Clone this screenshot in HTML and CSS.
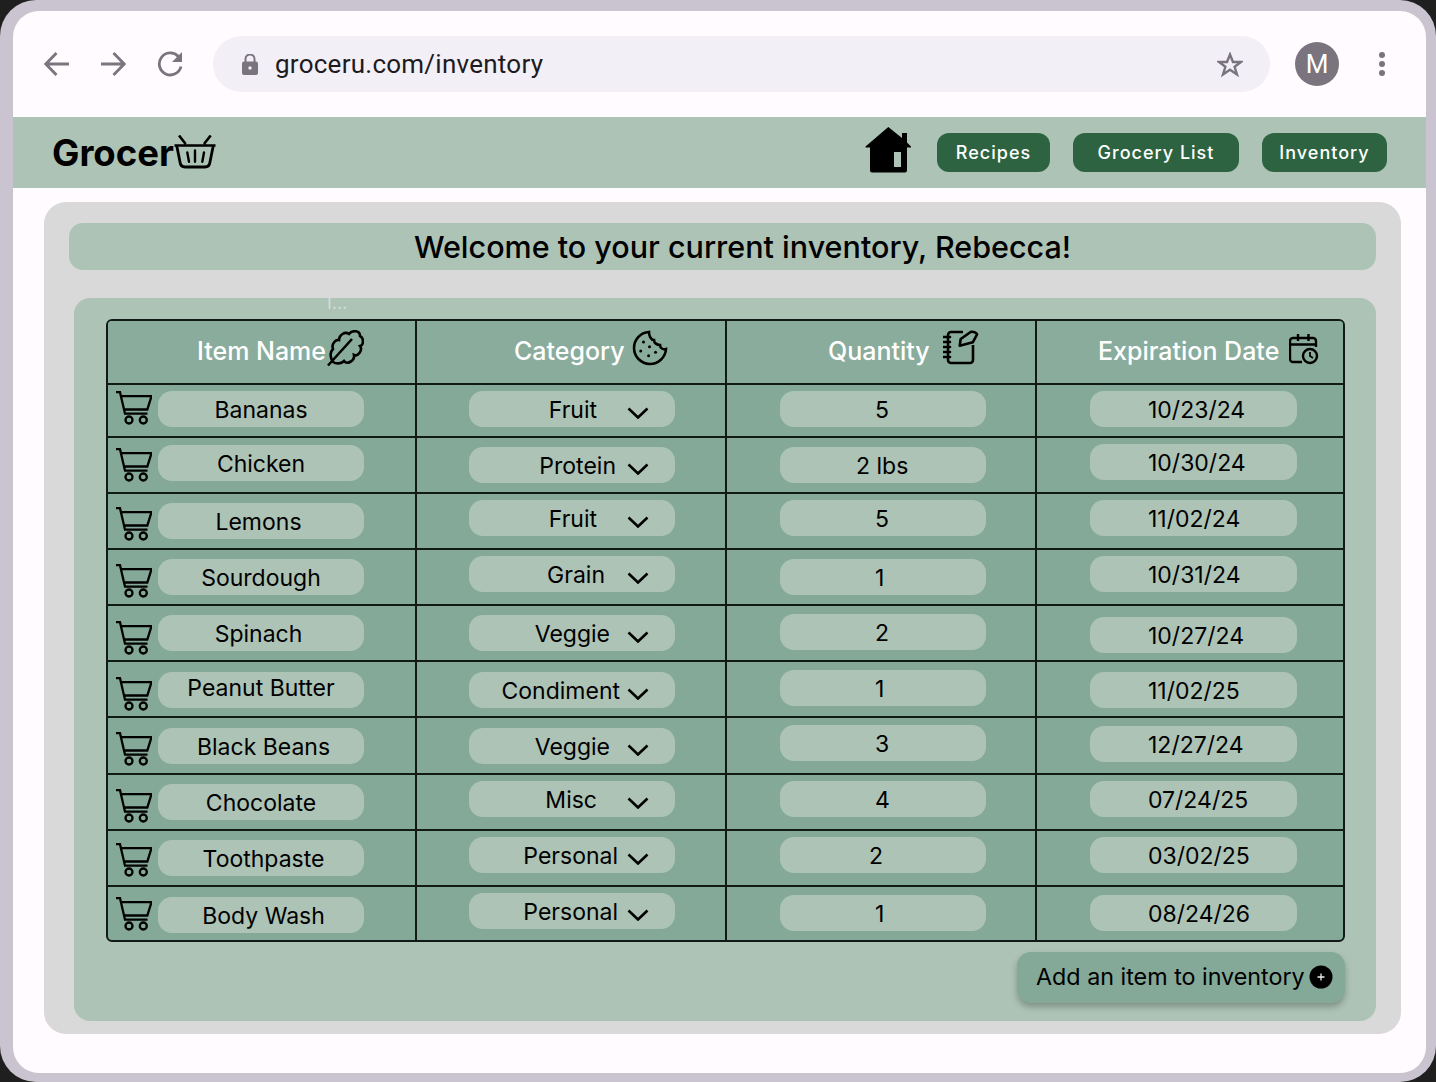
FILE: index.html
```html
<!DOCTYPE html>
<html lang="en">
<head>
    <meta charset="UTF-8">
    <title>Grocer Inventory</title>
    <link rel="stylesheet" href="styles.css">
</head>
<body>
    <svg class="icon-defs" width="0" height="0">
        <symbol id="cart" viewBox="0 0 37 36">
            <path d="M1 1.2H5L10 22.7H32.5M6 5.2H36.5L32.3 18.5H9" fill="none" stroke="currentColor" stroke-width="2.3"/>
            <circle cx="14" cy="29" r="3.5" fill="none" stroke="currentColor" stroke-width="2.3"/>
            <circle cx="28.3" cy="29" r="3.5" fill="none" stroke="currentColor" stroke-width="2.3"/>
        </symbol>
        <symbol id="chevron" viewBox="0 0 22 12">
            <path d="M1.5 1.5L11 10.5L20.5 1.5" fill="none" stroke="currentColor" stroke-width="2.6"/>
        </symbol>
    </svg>

    <div class="device">
        <div class="window">
            <header class="toolbar">
                <svg class="tool-icon arrow-back" viewBox="0 0 26 26"><path d="M25 13H2M12.5 2L1.8 13L12.5 24" fill="none" stroke="#79747e" stroke-width="2.8"/></svg>
                <svg class="tool-icon arrow-forward" viewBox="0 0 26 26"><path d="M1 13H24M13.5 2L24.2 13L13.5 24" fill="none" stroke="#79747e" stroke-width="2.8"/></svg>
                <svg class="tool-icon reload" viewBox="0 0 26 26"><path d="M21.4 5.5A11 11 0 1 0 24 15.5" fill="none" stroke="#79747e" stroke-width="2.8"/><path d="M25 1V11H15Z" fill="#79747e"/></svg>
                <div class="url-bar">
                    <svg class="lock" viewBox="0 0 16 21"><path d="M3.5 8V5a4.5 4.5 0 0 1 9 0V8" fill="none" stroke="#79747e" stroke-width="2"/><rect y="7.5" width="16" height="13.5" rx="2" fill="#79747e"/><circle cx="8" cy="14" r="1.7" fill="#f3eff7"/></svg>
                    <span class="url-text">groceru.com/inventory</span>
                    <svg class="star" viewBox="0 0 26 25"><path d="M13 2.5L16 10H24L17.6 14.8L20 22.5L13 17.8L6 22.5L8.4 14.8L2 10H10Z" fill="none" stroke="#79747e" stroke-width="2.4"/></svg>
                </div>
                <div class="avatar">M</div>
                <div class="menu-dots"><span></span><span></span><span></span></div>
            </header>

            <nav class="site-nav">
                <div class="logo">
                    <span class="logo-text">Grocer</span>
                    <svg class="logo-basket" viewBox="0 0 42 35">
                        <path d="M5 0.5L11.7 9M36.7 0.5L30 9M0.5 10.5H41.5" fill="none" stroke="#000" stroke-width="2.6"/>
                        <path d="M2.8 11L6 27Q6.6 32 11 32H31Q35.4 32 36 27L39.2 11" fill="none" stroke="#000" stroke-width="2.8"/>
                        <path d="M13.3 17.5L15 26.7M21 15.5V26.7M30 17.5L28.3 26.7" fill="none" stroke="#000" stroke-width="2.4" stroke-linecap="round"/>
                    </svg>
                </div>
                <svg class="home-icon" viewBox="0 0 46 46">
                    <path d="M23.3 0L0.5 19.5V20.5H5V43.5Q5 45.5 7 45.5H40Q42 45.5 42 43.5V20.5H46V19.5L42 15.5V6H37V11Z" fill="#000"/>
                    <rect x="29" y="25" width="7" height="15" fill="#adc3b5"/>
                </svg>
                <a class="nav-btn btn-recipes">Recipes</a>
                <a class="nav-btn btn-list">Grocery List</a>
                <a class="nav-btn btn-inventory">Inventory</a>
            </nav>

            <main class="content-panel">
                <h1 class="welcome">Welcome to your current inventory, Rebecca!</h1>

                <section class="inventory-panel">
                    <span class="stray-text">I...</span>
                    <div class="inventory-table">
                        <div class="head-cell head-item">
                            <span>Item Name</span>
                            <svg class="head-icon leaf" viewBox="0 0 37 37"><path d="M6 32C3 27 3 22 6 19C4 14 9 9 12 10C12 5 18 1 22 4C25 0 33 0 33 6C37 8 37 15 33 16C36 20 31 27 27 25C28 31 20 35 17 31C14 34 9 34 6 32Z" fill="none" stroke="#000" stroke-width="2.6"/><path d="M1 35.5L25 9" fill="none" stroke="#000" stroke-width="2.6"/></svg>
                        </div>
                        <div class="head-cell head-category">
                            <span>Category</span>
                            <svg class="head-icon cookie" viewBox="0 0 36 36"><path d="M17 2A16 16 0 1 0 34 19C31 20 28 18 28 15C25 15 22 13 22 10C19 10 17 6 17 2Z" fill="none" stroke="#000" stroke-width="2.6"/><circle cx="11.5" cy="12" r="1.5"/><circle cx="17.5" cy="16.7" r="1.5"/><circle cx="8.7" cy="21" r="1.5"/><circle cx="16.6" cy="25.7" r="1.5"/><circle cx="23.5" cy="22.3" r="1.5"/></svg>
                        </div>
                        <div class="head-cell head-quantity">
                            <span>Quantity</span>
                            <svg class="head-icon notebook" viewBox="0 0 36 36"><path d="M20 2H8A3 3 0 0 0 5 5V30A3 3 0 0 0 8 33H27A3 3 0 0 0 30 30V15" fill="none" stroke="#000" stroke-width="2.6"/><path d="M0.5 7H7M0.5 12H7M0.5 17H7M0.5 22H7M0.5 27H7" stroke="#000" stroke-width="2.6" stroke-linecap="round"/><path d="M16.7 15.7L17.7 9L28 1.7Q33 1.5 34 4.5L29.8 12.3Z" fill="none" stroke="#000" stroke-width="2.6" stroke-linejoin="round"/></svg>
                        </div>
                        <div class="head-cell head-date">
                            <span>Expiration Date</span>
                            <svg class="head-icon calendar" viewBox="0 0 30 32"><path d="M13 29H4A3 3 0 0 1 1 26V8A3 3 0 0 1 4 5H24A3 3 0 0 1 27 8V14M1 11.5H27M9 1V8M19.5 1V8" fill="none" stroke="#000" stroke-width="2.4"/><circle cx="21" cy="23" r="7" fill="none" stroke="#000" stroke-width="2.4"/><path d="M21 19V23L24 25" fill="none" stroke="#000" stroke-width="1.8"/></svg>
                        </div>

                        <!-- rows -->
                        <div class="cell item-cell"><svg class="cart m5"><use href="#cart"/></svg><div class="pill m5">Bananas</div></div>
                        <div class="cell cat-cell"><div class="pill select m5"><span class="gap-30">Fruit</span><svg class="chevron"><use href="#chevron"/></svg></div></div>
                        <div class="cell qty-cell"><div class="pill qty m5">5</div></div>
                        <div class="cell date-cell"><div class="pill date m5">10/23/24</div></div>

                        <div class="cell item-cell"><svg class="cart m9"><use href="#cart"/></svg><div class="pill m6">Chicken</div></div>
                        <div class="cell cat-cell"><div class="pill select m8"><span class="gap-11">Protein</span><svg class="chevron"><use href="#chevron"/></svg></div></div>
                        <div class="cell qty-cell"><div class="pill qty qty-wide m8">2 lbs</div></div>
                        <div class="cell date-cell"><div class="pill date m5">10/30/24</div></div>

                        <div class="cell item-cell"><svg class="cart m12"><use href="#cart"/></svg><div class="pill nudge-left m8">Lemons</div></div>
                        <div class="cell cat-cell"><div class="pill select m5"><span class="gap-30">Fruit</span><svg class="chevron"><use href="#chevron"/></svg></div></div>
                        <div class="cell qty-cell"><div class="pill qty m5">5</div></div>
                        <div class="cell date-cell"><div class="pill date m5">11/02/24</div></div>

                        <div class="cell item-cell"><svg class="cart m13"><use href="#cart"/></svg><div class="pill m8">Sourdough</div></div>
                        <div class="cell cat-cell"><div class="pill select m5"><span class="gap-22">Grain</span><svg class="chevron"><use href="#chevron"/></svg></div></div>
                        <div class="cell qty-cell"><div class="pill qty m8">1</div></div>
                        <div class="cell date-cell"><div class="pill date m5">10/31/24</div></div>

                        <div class="cell item-cell"><svg class="cart m14"><use href="#cart"/></svg><div class="pill nudge-left m8">Spinach</div></div>
                        <div class="cell cat-cell"><div class="pill select m8"><span class="gap-17">Veggie</span><svg class="chevron"><use href="#chevron"/></svg></div></div>
                        <div class="cell qty-cell"><div class="pill qty m7">2</div></div>
                        <div class="cell date-cell"><div class="pill date m10">10/27/24</div></div>

                        <div class="cell item-cell"><svg class="cart m14"><use href="#cart"/></svg><div class="pill raised m9">Peanut Butter</div></div>
                        <div class="cell cat-cell"><div class="pill select m9"><span class="gap-7">Condiment</span><svg class="chevron"><use href="#chevron"/></svg></div></div>
                        <div class="cell qty-cell"><div class="pill qty m7">1</div></div>
                        <div class="cell date-cell"><div class="pill date m9">11/02/25</div></div>

                        <div class="cell item-cell"><svg class="cart m13"><use href="#cart"/></svg><div class="pill nudge-right m9">Black Beans</div></div>
                        <div class="cell cat-cell"><div class="pill select m9"><span class="gap-17">Veggie</span><svg class="chevron"><use href="#chevron"/></svg></div></div>
                        <div class="cell qty-cell"><div class="pill qty m6">3</div></div>
                        <div class="cell date-cell"><div class="pill date m7">12/27/24</div></div>

                        <div class="cell item-cell"><svg class="cart m13"><use href="#cart"/></svg><div class="pill m8">Chocolate</div></div>
                        <div class="cell cat-cell"><div class="pill select m5"><span class="gap-30">Misc</span><svg class="chevron"><use href="#chevron"/></svg></div></div>
                        <div class="cell qty-cell"><div class="pill qty m5">4</div></div>
                        <div class="cell date-cell"><div class="pill date m5">07/24/25</div></div>

                        <div class="cell item-cell"><svg class="cart m11"><use href="#cart"/></svg><div class="pill nudge-right m8">Toothpaste</div></div>
                        <div class="cell cat-cell"><div class="pill select m5"><span class="gap-9">Personal</span><svg class="chevron"><use href="#chevron"/></svg></div></div>
                        <div class="cell qty-cell"><div class="pill qty qty-left m5">2</div></div>
                        <div class="cell date-cell"><div class="pill date m5">03/02/25</div></div>

                        <div class="cell item-cell"><svg class="cart m9"><use href="#cart"/></svg><div class="pill nudge-right m9">Body Wash</div></div>
                        <div class="cell cat-cell"><div class="pill select m5"><span class="gap-9">Personal</span><svg class="chevron"><use href="#chevron"/></svg></div></div>
                        <div class="cell qty-cell"><div class="pill qty m7">1</div></div>
                        <div class="cell date-cell"><div class="pill date m7">08/24/26</div></div>
                    </div>

                    <div class="add-row">
                        <button class="add-btn">Add an item to inventory
                            <svg class="add-icon" viewBox="0 0 24 24"><circle cx="12" cy="12" r="11.5" fill="#000"/><path d="M12 8.5V15.5M8.5 12H15.5" stroke="#e8efe9" stroke-width="1.3"/></svg>
                        </button>
                    </div>
                </section>
            </main>
        </div>
    </div>
</body>
</html>
```

FILE: styles.css
```css
:root {
    --sage-color: #adc3b5;
    --table-color: #84a998;
    --head-color: #8aac9c;
    --line-color: #111a16;
    --forest-color: #2d6340;
    --chrome-color: #79747e;
    --paper-color: #fffbfe;
}

* {
    box-sizing: border-box;
}

body {
    margin: 0;
    background-color: #1f1f1f;
    font-family: Inter, 'Open Sans', sans-serif;
    color: #000;
    overflow: hidden;
}

.icon-defs {
    display: block;
    height: 0;
}

.device {
    width: 1436px;
    height: 1082px;
    padding: 11px 10px 9px 13px;
    background-color: #cac4d0;
    border-radius: 36px;
}

.window {
    height: 100%;
    display: flex;
    flex-direction: column;
    background-color: var(--paper-color);
    border-radius: 26px;
    overflow: hidden;
}

/* browser toolbar */
.toolbar {
    height: 106px;
    flex-shrink: 0;
    display: flex;
    align-items: center;
    padding-left: 31px;
}

.tool-icon {
    width: 26px;
    height: 26px;
    flex-shrink: 0;
}

.arrow-forward {
    margin-left: 30px;
}

.reload {
    margin-left: 31px;
}

.url-bar {
    width: 1057px;
    height: 56px;
    margin-left: 30px;
    padding: 0 27px 0 29px;
    display: flex;
    align-items: center;
    background-color: #f3eff7;
    border-radius: 28px;
}

.lock {
    width: 16px;
    height: 21px;
}

.url-text {
    margin-left: 17px;
    flex: 1;
    font-family: Roboto, sans-serif;
    font-size: 26px;
    letter-spacing: 0.25px;
    color: #1d1b20;
}

.star {
    width: 26px;
    height: 25px;
}

.avatar {
    width: 44px;
    height: 44px;
    margin-left: 25px;
    display: flex;
    align-items: center;
    justify-content: center;
    background-color: var(--chrome-color);
    border-radius: 50%;
    font-family: Roboto, sans-serif;
    font-size: 26px;
    color: #fff;
}

.menu-dots {
    margin-left: 40px;
    display: flex;
    flex-direction: column;
    gap: 3px;
}

.menu-dots span {
    width: 6px;
    height: 6px;
    background-color: var(--chrome-color);
    border-radius: 50%;
}

/* site nav */
.site-nav {
    height: 71px;
    flex-shrink: 0;
    display: flex;
    align-items: center;
    padding: 0 39px 0 39px;
    background-color: var(--sage-color);
}

.logo {
    display: flex;
    align-items: center;
    margin-right: auto;
}

.logo-text {
    font-size: 36.5px;
    font-weight: 700;
}

.logo-basket {
    width: 42px;
    height: 35px;
    margin-top: -1px;
}

.home-icon {
    width: 46px;
    height: 46px;
    margin-right: 26px;
    margin-top: -5px;
}

.nav-btn {
    height: 39px;
    display: flex;
    align-items: center;
    justify-content: center;
    background-color: var(--forest-color);
    border-radius: 12px;
    color: #fff;
    font-size: 18px;
    font-weight: 500;
    letter-spacing: 1px;
}

.btn-recipes {
    width: 113px;
}

.btn-list {
    width: 166px;
    margin-left: 23px;
}

.btn-inventory {
    width: 125px;
    margin-left: 23px;
}

/* main area */
.content-panel {
    height: 832px;
    margin: 14px 25px 0 31px;
    padding-top: 21px;
    background-color: #d9d9d9;
    border-radius: 22px;
}

.welcome {
    height: 47px;
    margin: 0 25px;
    padding-left: 40px;
    display: flex;
    align-items: center;
    justify-content: center;
    background-color: var(--sage-color);
    border-radius: 14px;
    font-size: 30.5px;
    font-weight: 500;
}

.inventory-panel {
    position: relative;
    height: 723px;
    margin: 28px 25px 0 30px;
    padding: 21px 31px 0 32px;
    background-color: var(--sage-color);
    border-radius: 16px;
}

.stray-text {
    position: absolute;
    left: 253px;
    top: -6px;
    font-size: 18px;
    color: #d3ddd6;
}

.inventory-table {
    height: 623px;
    display: grid;
    grid-template-columns: 309px 310px 310px 1fr;
    grid-template-rows: 62px 53px 56px 56px 56px 56px 56px 57px 56px 56px 55px;
    background-color: var(--table-color);
    border: 2px solid var(--line-color);
    border-radius: 6px;
    overflow: hidden;
}

.head-cell {
    display: flex;
    align-items: center;
    padding-bottom: 2px;
    background-color: var(--head-color);
    border-right: 2px solid var(--line-color);
    color: #fff;
    font-size: 25px;
    font-weight: 500;
}

.head-cell:nth-child(4) {
    border-right: none;
}

.head-item {
    padding-left: 89px;
}

.head-category {
    padding-left: 97px;
}

.head-quantity {
    padding-left: 101px;
}

.head-date {
    padding-left: 61px;
}

.head-icon {
    flex-shrink: 0;
}

.leaf {
    width: 37px;
    height: 37px;
    margin-left: 1px;
    margin-top: -6px;
}

.cookie {
    width: 36px;
    height: 36px;
    margin-left: 7px;
    margin-top: -7px;
}

.notebook {
    width: 36px;
    height: 36px;
    margin-left: 13px;
    margin-top: -6px;
}

.calendar {
    width: 30px;
    height: 32px;
    margin-left: 10px;
    margin-top: -5px;
}

.cell {
    display: flex;
    justify-content: flex-start;
    align-items: flex-start;
    padding-top: 1px;
    border-top: 2px solid var(--line-color);
    border-right: 2px solid var(--line-color);
}

.cat-cell {
    padding-left: 52px;
}

.qty-cell {
    padding-left: 53px;
}

.date-cell {
    padding-left: 53px;
    border-right: none;
}

.item-cell {
    padding-left: 7px;
}

.cart {
    width: 37px;
    height: 36px;
    flex-shrink: 0;
    color: #000;
}

.pill {
    width: 206px;
    height: 36px;
    display: flex;
    align-items: center;
    justify-content: center;
    padding-top: 2px;
    background-color: var(--sage-color);
    border-radius: 14px;
    font-size: 23px;
    color: #000;
}

.item-cell .pill {
    margin-left: 6px;
}

.nudge-left {
    padding-right: 5px;
}

.nudge-right {
    padding-left: 5px;
}

.raised {
    padding-bottom: 6px;
}

.select {
    justify-content: flex-end;
    padding-right: 26px;
}

.chevron {
    width: 22px;
    height: 12px;
    margin-top: 5px;
    flex-shrink: 0;
}

.gap-7 {
    margin-right: 7px;
}

.gap-9 {
    margin-right: 9px;
}

.gap-11 {
    margin-right: 11px;
}

.gap-17 {
    margin-right: 17px;
}

.gap-22 {
    margin-right: 22px;
}

.gap-30 {
    margin-right: 30px;
}

.qty {
    justify-content: flex-start;
    padding-left: 95px;
}

.qty-wide {
    padding-left: 76px;
}

.qty-left {
    padding-left: 89px;
}

.date {
    width: 207px;
    justify-content: flex-start;
    padding-left: 58px;
}

/* vertical place of a pill or cart in its row */
.m5 {
    margin-top: 5px;
}

.m6 {
    margin-top: 6px;
}

.m7 {
    margin-top: 7px;
}

.m8 {
    margin-top: 8px;
}

.m9 {
    margin-top: 9px;
}

.m10 {
    margin-top: 10px;
}

.m11 {
    margin-top: 11px;
}

.m12 {
    margin-top: 12px;
}

.m13 {
    margin-top: 13px;
}

.m14 {
    margin-top: 14px;
}

.add-row {
    display: flex;
    justify-content: flex-end;
    margin-top: 10px;
}

.add-btn {
    width: 328px;
    height: 51px;
    display: flex;
    align-items: center;
    padding: 0 0 3px 19px;
    background-color: var(--table-color);
    border: none;
    border-radius: 14px;
    box-shadow: 0 4px 6px rgba(0, 0, 0, 0.25);
    font-family: inherit;
    font-size: 23.3px;
    color: #000;
}

.add-icon {
    width: 24px;
    height: 24px;
    margin-left: 4px;
    margin-top: 2px;
}
```
